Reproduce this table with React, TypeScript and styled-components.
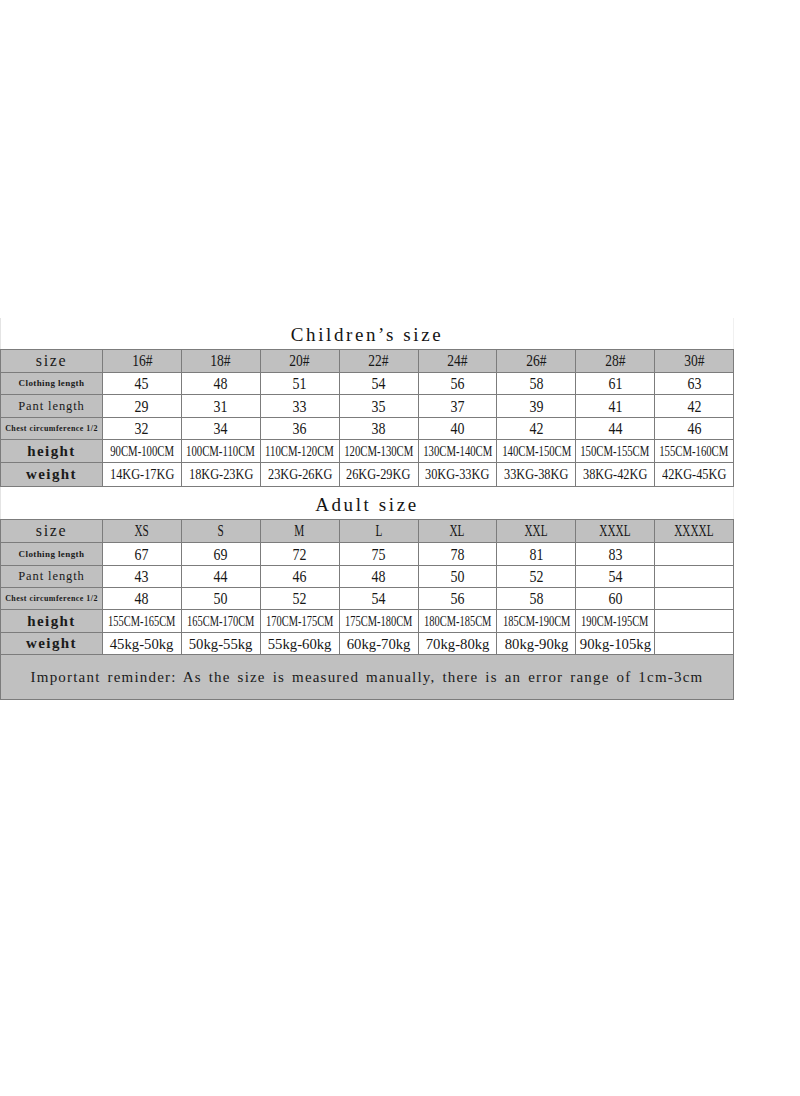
import styled, { createGlobalStyle } from 'styled-components'

const GlobalStyle = createGlobalStyle`
	html, body {
		margin: 0;
		padding: 0;
		background: #ffffff;
	}
	body {
		font-family: 'Liberation Serif', 'Times New Roman', serif;
		color: #141414;
	}
`

type LabelStyle = { size: number; ls: number; bold?: boolean }

type Row = {
	label: string
	look: LabelStyle
	values: string[]
	fs: number
	sx: number
	height: number
}

const SMALL: LabelStyle = { size: 9, ls: 0.4, bold: true }
const TINY: LabelStyle = { size: 8, ls: 0.45, bold: true }
const MID: LabelStyle = { size: 12.5, ls: 0.9 }
const BIG: LabelStyle = { size: 15, ls: 1.4, bold: true }
const HEAD: LabelStyle = { size: 16, ls: 1.6 }

const CHILD_HEAD = ['16#', '18#', '20#', '22#', '24#', '26#', '28#', '30#']
const ADULT_HEAD = ['XS', 'S', 'M', 'L', 'XL', 'XXL', 'XXXL', 'XXXXL']

const childRows: Row[] = [
	{ label: 'Clothing length', look: SMALL, values: ['45', '48', '51', '54', '56', '58', '61', '63'], fs: 17, sx: 0.82, height: 22 },
	{ label: 'Pant length', look: MID, values: ['29', '31', '33', '35', '37', '39', '41', '42'], fs: 17, sx: 0.82, height: 23 },
	{ label: 'Chest circumference 1/2', look: TINY, values: ['32', '34', '36', '38', '40', '42', '44', '46'], fs: 17, sx: 0.82, height: 22 },
	{
		label: 'height',
		look: BIG,
		values: ['90CM-100CM', '100CM-110CM', '110CM-120CM', '120CM-130CM', '130CM-140CM', '140CM-150CM', '150CM-155CM', '155CM-160CM'],
		fs: 14.5,
		sx: 0.74,
		height: 23,
	},
	{
		label: 'weight',
		look: BIG,
		values: ['14KG-17KG', '18KG-23KG', '23KG-26KG', '26KG-29KG', '30KG-33KG', '33KG-38KG', '38KG-42KG', '42KG-45KG'],
		fs: 15,
		sx: 0.82,
		height: 24,
	},
]

const adultRows: Row[] = [
	{ label: 'Clothing length', look: SMALL, values: ['67', '69', '72', '75', '78', '81', '83', ''], fs: 17, sx: 0.82, height: 23 },
	{ label: 'Pant length', look: MID, values: ['43', '44', '46', '48', '50', '52', '54', ''], fs: 17, sx: 0.82, height: 22 },
	{ label: 'Chest circumference 1/2', look: TINY, values: ['48', '50', '52', '54', '56', '58', '60', ''], fs: 17, sx: 0.82, height: 22 },
	{
		label: 'height',
		look: BIG,
		values: ['155CM-165CM', '165CM-170CM', '170CM-175CM', '175CM-180CM', '180CM-185CM', '185CM-190CM', '190CM-195CM', ''],
		fs: 14.5,
		sx: 0.72,
		height: 23,
	},
	{
		label: 'weight',
		look: BIG,
		values: ['45kg-50kg', '50kg-55kg', '55kg-60kg', '60kg-70kg', '70kg-80kg', '80kg-90kg', '90kg-105kg', ''],
		fs: 15.5,
		sx: 0.95,
		height: 22,
	},
]

const Page = styled.div`
	padding-top: 318px;
	height: 778px;
	overflow: hidden;
`

const Sheet = styled.div`
	width: 734px;
	display: flex;
	flex-direction: column;
`

const Title = styled.div<{ $h: number }>`
	height: ${(p) => p.$h}px;
	display: flex;
	align-items: flex-end;
	justify-content: center;
	padding-bottom: 3px;
	box-sizing: border-box;
	font-family: 'Liberation Serif', 'Times New Roman', serif;
	font-size: 19px;
	letter-spacing: 2.6px;
	line-height: 22px;
	color: #151515;
	border-left: 1px solid #e4e4e4;
	border-right: 1px solid #f0f0f0;
`

const Grid = styled.table`
	width: 734px;
	border-collapse: collapse;
	table-layout: fixed;
`

const Tr = styled.tr<{ $h: number }>`
	height: ${(p) => p.$h}px;
`

const Cell = styled.td<{ $shade?: boolean }>`
	border: 1px solid #7c7c7c;
	padding: 0;
	vertical-align: middle;
	background: ${(p) => (p.$shade ? '#c0c0c0' : '#ffffff')};
	overflow: hidden;
	line-height: 1;
`

const Center = styled.div`
	display: flex;
	justify-content: center;
	align-items: center;
	white-space: nowrap;
`

const Label = styled.span<{ $look: LabelStyle }>`
	font-family: 'Liberation Serif', 'Times New Roman', serif;
	font-size: ${(p) => p.$look.size}px;
	letter-spacing: ${(p) => p.$look.ls}px;
	font-weight: ${(p) => (p.$look.bold ? 700 : 400)};
	color: #1a1a1a;
`

const Squeeze = styled.span<{ $fs: number; $sx: number }>`
	display: inline-block;
	flex: none;
	font-family: 'Liberation Serif', 'Times New Roman', serif;
	font-size: ${(p) => p.$fs}px;
	transform: scaleX(${(p) => p.$sx});
	color: #161616;
`

const Reminder = styled.span`
	font-family: 'Liberation Serif', 'Times New Roman', serif;
	font-size: 15px;
	letter-spacing: 1.2px;
	word-spacing: 2px;
	color: #1a1a1a;
`

function SizeTable({ head, headSx, rows, reminder }: { head: string[]; headSx: number; rows: Row[]; reminder?: boolean }) {
	return (
		<Grid>
			<colgroup>
				<col style={{ width: 102 }} />
				{head.map((h) => (
					<col key={h} />
				))}
			</colgroup>
			<tbody>
				<Tr $h={23}>
					<Cell $shade>
						<Center>
							<Label $look={HEAD}>size</Label>
						</Center>
					</Cell>
					{head.map((h) => (
						<Cell $shade key={h}>
							<Center>
								<Squeeze $fs={16.5} $sx={headSx}>
									{h}
								</Squeeze>
							</Center>
						</Cell>
					))}
				</Tr>
				{rows.map((r) => (
					<Tr $h={r.height} key={r.label}>
						<Cell $shade>
							<Center>
								<Label $look={r.look}>{r.label}</Label>
							</Center>
						</Cell>
						{r.values.map((v, i) => (
							<Cell key={i}>
								<Center>
									<Squeeze $fs={r.fs} $sx={r.sx}>
										{v}
									</Squeeze>
								</Center>
							</Cell>
						))}
					</Tr>
				))}
				{reminder && (
					<Tr $h={45}>
						<Cell $shade colSpan={9}>
							<Center>
								<Reminder>
									Important reminder: As the size is measured manually, there is an error range of 1cm-3cm
								</Reminder>
							</Center>
						</Cell>
					</Tr>
				)}
			</tbody>
		</Grid>
	)
}

export default function App() {
	return (
		<>
			<GlobalStyle />
			<Page>
				<Sheet>
					<Title $h={31}>Children’s size</Title>
					<SizeTable head={CHILD_HEAD} headSx={0.82} rows={childRows} />
					<Title $h={32}>Adult size</Title>
					<SizeTable head={ADULT_HEAD} headSx={0.68} rows={adultRows} reminder />
				</Sheet>
			</Page>
		</>
	)
}
